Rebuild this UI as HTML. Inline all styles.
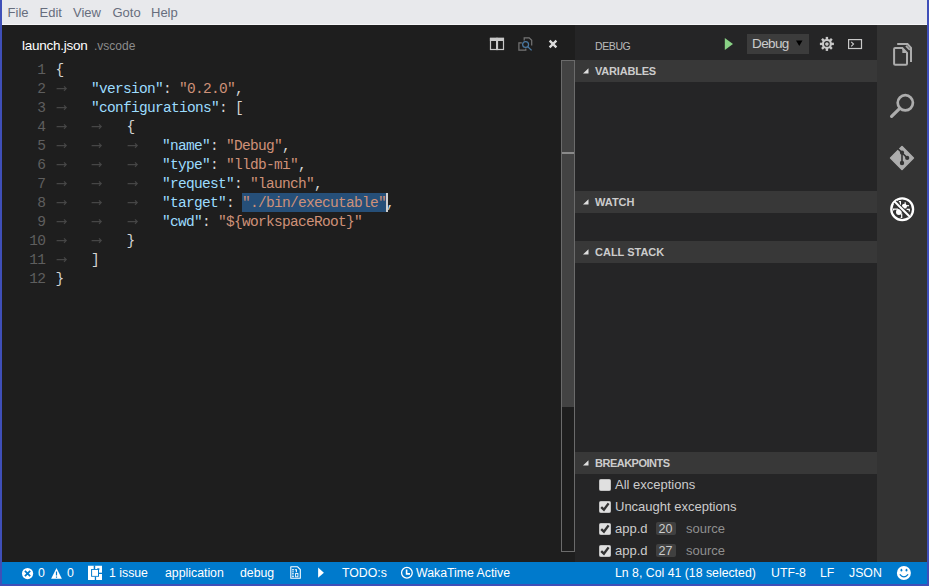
<!DOCTYPE html>
<html><head><meta charset="utf-8">
<style>
*{margin:0;padding:0;box-sizing:border-box}
html,body{width:929px;height:586px;overflow:hidden;background:#1e1e1e;position:relative;font-family:"Liberation Sans",sans-serif}
.a{position:absolute}
.ln{position:absolute;left:19.2px;width:26px;text-align:right;font-family:"Liberation Mono",monospace;font-size:14.5px;letter-spacing:-0.7px;line-height:19px;color:#5e5e5e;white-space:pre;padding-top:1px}
.cl{position:absolute;font-family:"Liberation Mono",monospace;font-size:14.5px;letter-spacing:-0.7px;line-height:19px;white-space:pre;padding-top:1px}
.arr{position:absolute}
.menu span{position:absolute;top:1px;line-height:24px;font-size:13px;color:#676d7d}
.sh{position:absolute;left:575px;width:302px;height:22px;background:#383838}
.sh .t{position:absolute;left:20px;top:0;line-height:22px;font-size:11px;font-weight:bold;color:#cccccc}
.sh svg{position:absolute;left:7.8px;top:8px}
.sb span{position:absolute;top:562px;line-height:22px;font-size:12.3px;color:#fff;white-space:pre}
.bp{position:absolute;font-size:13px;color:#cccccc;line-height:22px;white-space:pre}
.cb{position:absolute;left:599px;width:12px;height:12px;background:#e0e0e0;border:1px solid #c2c2c2;border-radius:1.5px}
</style></head><body>
<!-- menubar -->
<div class="a" style="left:0;top:0;width:929px;height:25px;background:#e8e9ec"></div>
<div class="a" style="left:0;top:24px;width:929px;height:1px;background:#f6f6f8"></div>
<div class="menu">
<span style="left:7.6px">File</span><span style="left:39.5px">Edit</span><span style="left:73px">View</span><span style="left:112.5px">Goto</span><span style="left:151px">Help</span>
</div>
<!-- editor -->
<div class="a" style="left:2px;top:25px;width:573px;height:537px;background:#1e1e1e"></div>
<div class="a" style="left:22px;top:27.6px;line-height:35px;font-size:13.5px;letter-spacing:-0.25px;color:#ffffff;white-space:pre">launch.json</div>
<div class="a" style="left:94px;top:29px;line-height:35px;font-size:12px;color:#8c8c8c;white-space:pre">.vscode</div>
<!-- editor toolbar icons -->
<svg class="a" style="left:486px;top:34px" width="22" height="20"><rect x="4.5" y="4.4" width="13" height="11.1" fill="none" stroke="#c8c8c8" stroke-width="1.2"/><rect x="3.9" y="3.8" width="14.1" height="3.2" fill="#c8c8c8"/><rect x="10" y="3.8" width="2.1" height="12.3" fill="#c8c8c8"/></svg>
<svg class="a" style="left:510px;top:30px" width="30" height="30"><path d="M14.2 10.5V7.8H19.2L21.7 10.2V15.6" fill="none" stroke="#757575" stroke-width="1.2"/><path d="M11.8 12.9H8.9V20.2H15.8V18.5" fill="none" stroke="#757575" stroke-width="1.2"/><circle cx="15.6" cy="14.5" r="2.95" fill="none" stroke="#4b7ba5" stroke-width="1.2"/><path d="M17.8 16.7L21.6 20.4" stroke="#4b7ba5" stroke-width="1.3"/></svg>
<svg class="a" style="left:545px;top:36px" width="16" height="16"><path d="M4.6 4.6L11.4 11.4M11.4 4.6L4.6 11.4" stroke="#dcdcdc" stroke-width="2.3"/></svg>
<!-- selection -->
<div class="a" style="left:242px;top:193px;width:144px;height:19px;background:#264f78"></div>
<div class="a" style="left:386px;top:193px;width:2px;height:19px;background:#d0d0d0"></div>
<div class="ln" style="top:60px">1</div>
<div class="cl" style="left:55.5px;top:60px"><span style="color:#d4d4d4">{</span></div>
<div class="ln" style="top:79px">2</div>
<svg class="arr" style="left:55.5px;top:79px" width="12" height="19"><path d="M0.6 9.6H10.2M8 7.3L10.2 9.6L8 11.9" stroke="#464646" stroke-width="1.2" fill="none"/></svg>
<div class="cl" style="left:91.0px;top:79px"><span style="color:#9cdcfe">"version"</span><span style="color:#d4d4d4">: </span><span style="color:#ce9178">"0.2.0"</span><span style="color:#d4d4d4">,</span></div>
<div class="ln" style="top:98px">3</div>
<svg class="arr" style="left:55.5px;top:98px" width="12" height="19"><path d="M0.6 9.6H10.2M8 7.3L10.2 9.6L8 11.9" stroke="#464646" stroke-width="1.2" fill="none"/></svg>
<div class="cl" style="left:91.0px;top:98px"><span style="color:#9cdcfe">"configurations"</span><span style="color:#d4d4d4">: [</span></div>
<div class="ln" style="top:117px">4</div>
<svg class="arr" style="left:55.5px;top:117px" width="12" height="19"><path d="M0.6 9.6H10.2M8 7.3L10.2 9.6L8 11.9" stroke="#464646" stroke-width="1.2" fill="none"/></svg>
<svg class="arr" style="left:91.0px;top:117px" width="12" height="19"><path d="M0.6 9.6H10.2M8 7.3L10.2 9.6L8 11.9" stroke="#464646" stroke-width="1.2" fill="none"/></svg>
<div class="cl" style="left:126.5px;top:117px"><span style="color:#d4d4d4">{</span></div>
<div class="ln" style="top:136px">5</div>
<svg class="arr" style="left:55.5px;top:136px" width="12" height="19"><path d="M0.6 9.6H10.2M8 7.3L10.2 9.6L8 11.9" stroke="#464646" stroke-width="1.2" fill="none"/></svg>
<svg class="arr" style="left:91.0px;top:136px" width="12" height="19"><path d="M0.6 9.6H10.2M8 7.3L10.2 9.6L8 11.9" stroke="#464646" stroke-width="1.2" fill="none"/></svg>
<svg class="arr" style="left:126.5px;top:136px" width="12" height="19"><path d="M0.6 9.6H10.2M8 7.3L10.2 9.6L8 11.9" stroke="#464646" stroke-width="1.2" fill="none"/></svg>
<div class="cl" style="left:162.0px;top:136px"><span style="color:#9cdcfe">"name"</span><span style="color:#d4d4d4">: </span><span style="color:#ce9178">"Debug"</span><span style="color:#d4d4d4">,</span></div>
<div class="ln" style="top:155px">6</div>
<svg class="arr" style="left:55.5px;top:155px" width="12" height="19"><path d="M0.6 9.6H10.2M8 7.3L10.2 9.6L8 11.9" stroke="#464646" stroke-width="1.2" fill="none"/></svg>
<svg class="arr" style="left:91.0px;top:155px" width="12" height="19"><path d="M0.6 9.6H10.2M8 7.3L10.2 9.6L8 11.9" stroke="#464646" stroke-width="1.2" fill="none"/></svg>
<svg class="arr" style="left:126.5px;top:155px" width="12" height="19"><path d="M0.6 9.6H10.2M8 7.3L10.2 9.6L8 11.9" stroke="#464646" stroke-width="1.2" fill="none"/></svg>
<div class="cl" style="left:162.0px;top:155px"><span style="color:#9cdcfe">"type"</span><span style="color:#d4d4d4">: </span><span style="color:#ce9178">"lldb-mi"</span><span style="color:#d4d4d4">,</span></div>
<div class="ln" style="top:174px">7</div>
<svg class="arr" style="left:55.5px;top:174px" width="12" height="19"><path d="M0.6 9.6H10.2M8 7.3L10.2 9.6L8 11.9" stroke="#464646" stroke-width="1.2" fill="none"/></svg>
<svg class="arr" style="left:91.0px;top:174px" width="12" height="19"><path d="M0.6 9.6H10.2M8 7.3L10.2 9.6L8 11.9" stroke="#464646" stroke-width="1.2" fill="none"/></svg>
<svg class="arr" style="left:126.5px;top:174px" width="12" height="19"><path d="M0.6 9.6H10.2M8 7.3L10.2 9.6L8 11.9" stroke="#464646" stroke-width="1.2" fill="none"/></svg>
<div class="cl" style="left:162.0px;top:174px"><span style="color:#9cdcfe">"request"</span><span style="color:#d4d4d4">: </span><span style="color:#ce9178">"launch"</span><span style="color:#d4d4d4">,</span></div>
<div class="ln" style="top:193px">8</div>
<svg class="arr" style="left:55.5px;top:193px" width="12" height="19"><path d="M0.6 9.6H10.2M8 7.3L10.2 9.6L8 11.9" stroke="#464646" stroke-width="1.2" fill="none"/></svg>
<svg class="arr" style="left:91.0px;top:193px" width="12" height="19"><path d="M0.6 9.6H10.2M8 7.3L10.2 9.6L8 11.9" stroke="#464646" stroke-width="1.2" fill="none"/></svg>
<svg class="arr" style="left:126.5px;top:193px" width="12" height="19"><path d="M0.6 9.6H10.2M8 7.3L10.2 9.6L8 11.9" stroke="#464646" stroke-width="1.2" fill="none"/></svg>
<div class="cl" style="left:162.0px;top:193px"><span style="color:#9cdcfe">"target"</span><span style="color:#d4d4d4">: </span><span style="color:#ce9178">"./bin/executable"</span><span style="color:#d4d4d4">,</span></div>
<div class="ln" style="top:212px">9</div>
<svg class="arr" style="left:55.5px;top:212px" width="12" height="19"><path d="M0.6 9.6H10.2M8 7.3L10.2 9.6L8 11.9" stroke="#464646" stroke-width="1.2" fill="none"/></svg>
<svg class="arr" style="left:91.0px;top:212px" width="12" height="19"><path d="M0.6 9.6H10.2M8 7.3L10.2 9.6L8 11.9" stroke="#464646" stroke-width="1.2" fill="none"/></svg>
<svg class="arr" style="left:126.5px;top:212px" width="12" height="19"><path d="M0.6 9.6H10.2M8 7.3L10.2 9.6L8 11.9" stroke="#464646" stroke-width="1.2" fill="none"/></svg>
<div class="cl" style="left:162.0px;top:212px"><span style="color:#9cdcfe">"cwd"</span><span style="color:#d4d4d4">: </span><span style="color:#ce9178">"${workspaceRoot}"</span></div>
<div class="ln" style="top:231px">10</div>
<svg class="arr" style="left:55.5px;top:231px" width="12" height="19"><path d="M0.6 9.6H10.2M8 7.3L10.2 9.6L8 11.9" stroke="#464646" stroke-width="1.2" fill="none"/></svg>
<svg class="arr" style="left:91.0px;top:231px" width="12" height="19"><path d="M0.6 9.6H10.2M8 7.3L10.2 9.6L8 11.9" stroke="#464646" stroke-width="1.2" fill="none"/></svg>
<div class="cl" style="left:126.5px;top:231px"><span style="color:#d4d4d4">}</span></div>
<div class="ln" style="top:250px">11</div>
<svg class="arr" style="left:55.5px;top:250px" width="12" height="19"><path d="M0.6 9.6H10.2M8 7.3L10.2 9.6L8 11.9" stroke="#464646" stroke-width="1.2" fill="none"/></svg>
<div class="cl" style="left:91.0px;top:250px"><span style="color:#d4d4d4">]</span></div>
<div class="ln" style="top:269px">12</div>
<div class="cl" style="left:55.5px;top:269px"><span style="color:#d4d4d4">}</span></div>
<!-- overview ruler -->
<div class="a" style="left:561px;top:60px;width:14px;height:492px;border:1px solid #6b6b6b"></div>
<div class="a" style="left:562px;top:61px;width:12px;height:346px;background:#434343"></div>
<div class="a" style="left:562px;top:152px;width:12px;height:2px;background:#8a8a8a"></div>
<!-- sidebar -->
<div class="a" style="left:575px;top:25px;width:302px;height:537px;background:#252526"></div>
<div class="a" style="left:595px;top:29px;line-height:35px;font-size:10.5px;color:#bbbbbb;letter-spacing:-0.4px">DEBUG</div>
<svg class="a" style="left:724px;top:38px" width="10" height="13"><path d="M0.8 0L9 6L0.8 12Z" fill="#89d185"/></svg>
<div class="a" style="left:747px;top:34px;width:62px;height:20px;background:#3c3c3c"></div>
<div class="a" style="left:752px;top:34px;line-height:20px;font-size:13.5px;color:#cccccc;letter-spacing:-0.6px">Debug</div>
<svg class="a" style="left:796px;top:40px" width="7" height="7"><path d="M0 0.5H6.5L3.25 6Z" fill="#000"/></svg>
<svg class="a" style="left:816px;top:34px" width="22" height="20"><g transform="translate(10.9,9.9)" fill="#c8c8c8"><rect x="-1.2" y="-7" width="2.4" height="14"/><rect x="-1.2" y="-7" width="2.4" height="14" transform="rotate(45)"/><rect x="-1.2" y="-7" width="2.4" height="14" transform="rotate(90)"/><rect x="-1.2" y="-7" width="2.4" height="14" transform="rotate(135)"/><circle r="5"/><circle r="2.3" fill="none" stroke="#252526" stroke-width="1.1"/></g></svg>
<svg class="a" style="left:848px;top:38.6px" width="15" height="11"><rect x="0.6" y="0.6" width="12.9" height="8.9" fill="none" stroke="#c8c8c8" stroke-width="1.2"/><path d="M3.2 2.8L5.5 5.1L3.2 7.4" fill="none" stroke="#c8c8c8" stroke-width="1.2"/></svg>
<div class="sh" style="top:60px"><svg width="6" height="6"><path d="M5.5 0.2V5.6H0Z" fill="#e0e0e0"/></svg><span class="t" style="letter-spacing:-0.2px">VARIABLES</span></div>
<div class="sh" style="top:191px"><svg width="6" height="6"><path d="M5.5 0.2V5.6H0Z" fill="#e0e0e0"/></svg><span class="t">WATCH</span></div>
<div class="sh" style="top:241px"><svg width="6" height="6"><path d="M5.5 0.2V5.6H0Z" fill="#e0e0e0"/></svg><span class="t">CALL STACK</span></div>
<div class="sh" style="top:452px"><svg width="6" height="6"><path d="M5.5 0.2V5.6H0Z" fill="#e0e0e0"/></svg><span class="t" style="letter-spacing:-0.5px">BREAKPOINTS</span></div>
<div class="cb" style="top:479px"></div>
<div class="cb" style="top:501px"></div>
<div class="cb" style="top:523px"></div>
<div class="cb" style="top:545px"></div>
<div class="bp" style="left:615px;top:474px">All exceptions</div>
<div class="bp" style="left:615px;top:496px">Uncaught exceptions</div>
<div class="bp" style="left:615px;top:518px">app.d</div>
<div class="bp" style="left:615px;top:540px">app.d</div>
<div class="a" style="left:656px;top:522px;width:20px;height:13px;background:#404040;border-radius:2px"></div>
<div class="a" style="left:656px;top:544px;width:20px;height:13px;background:#404040;border-radius:2px"></div>
<div class="bp" style="left:658.5px;top:518px;font-size:12.5px">20</div>
<div class="bp" style="left:658.5px;top:540px;font-size:12.5px">27</div>
<div class="bp" style="left:686px;top:518px;color:#8f8f8f">source</div>
<div class="bp" style="left:686px;top:540px;color:#8f8f8f">source</div>
<!-- activity bar -->
<div class="a" style="left:877px;top:25px;width:50px;height:537px;background:#333333"></div>
<!-- statusbar -->
<div class="a" style="left:0;top:562px;width:929px;height:22px;background:#007acc"></div>
<div class="sb">
<span style="left:38px">0</span><span style="left:67px">0</span>
<span style="left:109px">1 issue</span>
<span style="left:165px">application</span>
<span style="left:240px">debug</span>
<span style="left:342px">TODO:s</span>
<span style="left:416px">WakaTime Active</span>
<span style="left:615px">Ln 8, Col 41 (18 selected)</span>
<span style="left:771px">UTF-8</span>
<span style="left:820px">LF</span>
<span style="left:849px">JSON</span>
</div>
<svg class="a" style="left:0;top:0" width="929" height="586">
<!-- checkmarks -->
<g fill="none" stroke="#333" stroke-width="2.4" stroke-linecap="butt">
<path d="M601.2 507.1L603.9 509.6L608.6 503.4"/>
<path d="M601.2 529.1L603.9 531.6L608.6 525.4"/>
<path d="M601.2 551.1L603.9 553.6L608.6 547.4"/>
</g>
<!-- status bar icons -->
<circle cx="27.55" cy="573.55" r="5.6" fill="#fff"/>
<path d="M24.9 570.9L30.2 576.2M30.2 570.9L24.9 576.2" stroke="#007acc" stroke-width="1.8"/>
<path d="M56.5 567.9L61.9 578.7H51.1Z" fill="#fff"/>
<path d="M56.5 571.6V575.6M56.5 576.6V577.8" stroke="#007acc" stroke-width="1.2"/>
<!-- issue icon -->
<path fill="#fff" fill-rule="evenodd" d="M88 565.8H102V580H88Z M91.1 569V576.8H99V569Z"/>
<g fill="#007acc"><rect x="93.7" y="565.5" width="1.5" height="3.7"/><rect x="98.8" y="572.7" width="3.5" height="1.3"/><rect x="94.8" y="576.6" width="1.3" height="3.7"/><rect x="97.2" y="568.3" width="2.2" height="1.5"/></g>
<rect x="92.1" y="569.9" width="5.9" height="6" fill="#fff"/>
<!-- binary file -->
<path d="M290.8 566.8H297.6L300.3 569.5V578.2H290.8Z" fill="none" stroke="#fff" stroke-width="1.1" stroke-linejoin="round"/>
<g fill="#fff"><rect x="292.1" y="569" width="1.8" height="0.9"/><rect x="292.1" y="570.4" width="1.8" height="0.6" opacity="0.6"/><rect x="292.1" y="571.4" width="1.8" height="0.8"/><rect x="294.8" y="569.3" width="1.6" height="0.9"/><rect x="295.8" y="569.3" width="1.1" height="2.9"/><rect x="292.1" y="572.9" width="1.6" height="0.8"/><rect x="292.5" y="572.9" width="0.9" height="4.1" opacity="0.7"/><rect x="292.1" y="576.2" width="1.8" height="0.9"/></g><rect x="295.6" y="573.4" width="2.3" height="3.4" fill="none" stroke="#fff" stroke-width="0.9"/>
<path d="M318.1 567.5L323.9 572.65L318.1 577.8Z" fill="#fff"/>
<!-- clock -->
<circle cx="406.9" cy="572.7" r="5.35" fill="none" stroke="#fff" stroke-width="1.3"/>
<path d="M406.6 569.5V573.9H410" fill="none" stroke="#fff" stroke-width="1.6"/>
<!-- smiley -->
<circle cx="903.9" cy="573" r="7" fill="#fff"/>
<ellipse cx="901.4" cy="570.2" rx="0.9" ry="1.4" fill="#007acc"/>
<ellipse cx="906.5" cy="570.2" rx="0.9" ry="1.4" fill="#007acc"/>
<path d="M899.8 574.3Q903.9 579.3 908.1 574.3" fill="none" stroke="#007acc" stroke-width="1.3"/>
<!-- activity bar -->
<g fill="none" stroke="#adadad" stroke-width="2">
<path d="M897.2 44H907.5L911 47.8V61.9"/><path d="M906 45.8L909.8 49.8" stroke-width="1.8"/>
<path d="M902.3 48H895.2Q894.1 48 894.1 49.1V63.7Q894.1 64.8 895.2 64.8H905.9Q907 64.8 907 63.7V52.9Z"/>
</g>
<path d="M902.3 48L907 52.9H902.3Z" fill="#adadad"/>
<circle cx="905.3" cy="102.8" r="7.6" fill="none" stroke="#adadad" stroke-width="2.7"/>
<path d="M899.8 108.3L891.6 116.4" stroke="#adadad" stroke-width="3.2" stroke-linecap="round"/>
<path d="M902 146.6L913.4 158L902 169.4L890.6 158Z" fill="#adadad" stroke="#adadad" stroke-width="1.6" stroke-linejoin="round"/>
<g stroke="#333" stroke-width="1.6" fill="none"><path d="M897.8 148.6L902 152.7V163M902 152.7L907.2 157.9"/></g>
<g fill="#333"><circle cx="902" cy="152.7" r="2.1"/><circle cx="902" cy="163" r="2.2"/><circle cx="907.2" cy="157.9" r="2.1"/></g>
<!-- debug icon -->
<circle cx="902.2" cy="209.2" r="10.9" fill="none" stroke="#fff" stroke-width="2.3"/>
<circle cx="898.9" cy="212" r="2.9" fill="#fff"/>
<circle cx="904.4" cy="206.2" r="2.5" fill="#fff"/>
<g stroke="#fff" stroke-width="1.2" fill="none">
<path d="M893.6 210.6V209.1H898"/>
<path d="M898.9 201.6H900.4V205.4"/>
<path d="M905.2 202.2V205"/>
<path d="M906 205.7H909"/>
<path d="M906.6 209.4H909.3V211.6"/>
<path d="M901.7 213.6V217.5H900.7"/>
</g>
<path d="M895 202L909.4 216.4" stroke="#333" stroke-width="4"/>
<path d="M894.6 201.6L909.8 216.8" stroke="#fff" stroke-width="2.1"/>
</svg>
<!-- borders -->
<div class="a" style="left:0;top:0;width:2px;height:586px;background:#3f4fb8"></div>
<div class="a" style="left:927px;top:0;width:2px;height:586px;background:#3f4fb8"></div>
<div class="a" style="left:0;top:584px;width:929px;height:2px;background:#3f4fb8"></div>
</body></html>
